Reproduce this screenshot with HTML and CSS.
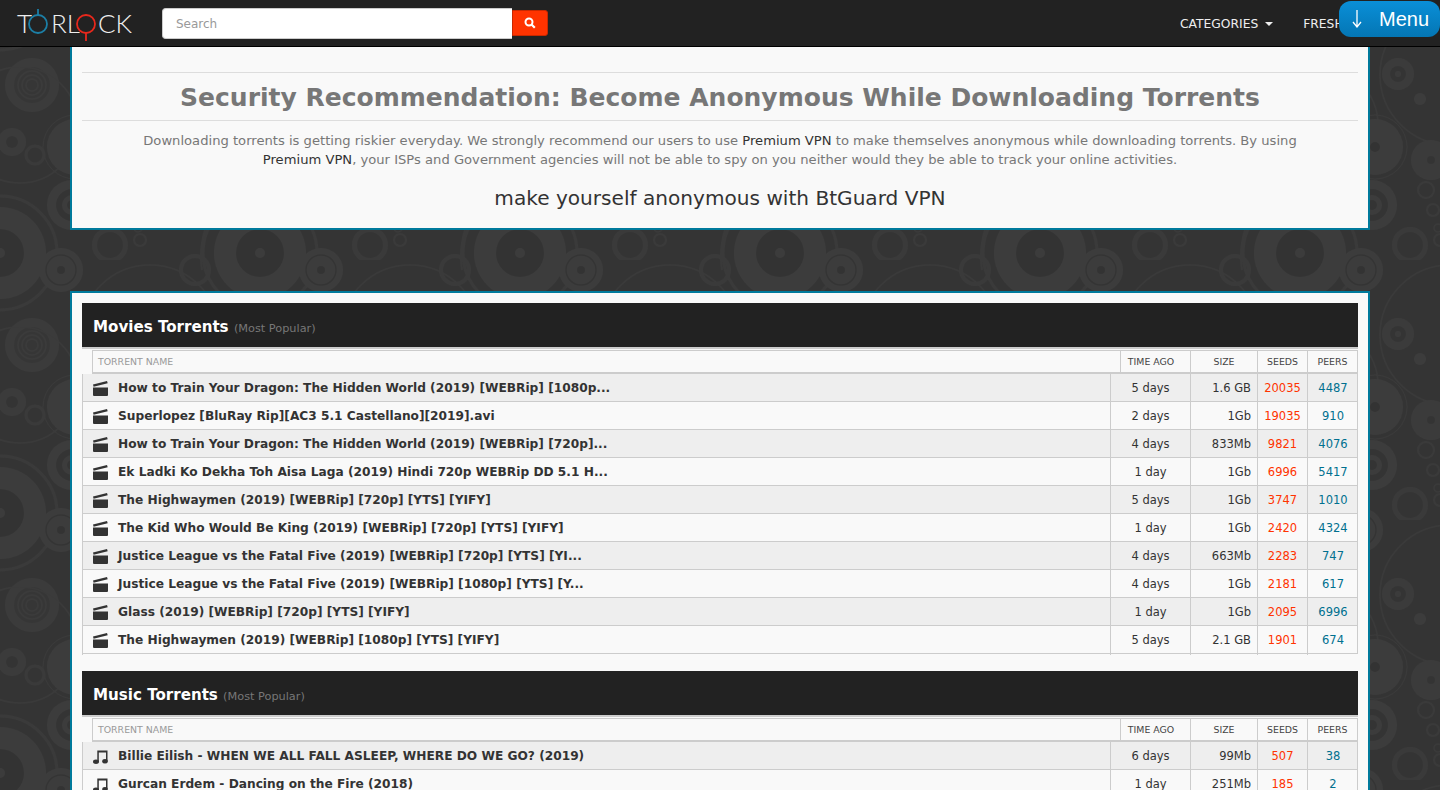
FILE: index.html
```html
<!DOCTYPE html>
<html lang="en">
<head>
  <meta charset="UTF-8" />
  <title>Torlock</title>
  <link rel="stylesheet" href="styles.css">
</head>
<body>

  <header class="navbar">
    <svg class="logo" width="116" height="35" viewBox="0 0 116 35">
      <text class="logo-text" x="1" y="27">T</text>
      <circle cx="22" cy="18" r="9" fill="none" stroke="#1c7fa6" stroke-width="1.800"/>
      <path d="M22 3v6" stroke="#1c7fa6" stroke-width="1.800"/>
      <text class="logo-text" x="35" y="27">RL</text>
      <circle cx="70" cy="18" r="9" fill="none" stroke="#e8281c" stroke-width="1.800"/>
      <path d="M70 27v8" stroke="#e8281c" stroke-width="1.800"/>
      <text class="logo-text" x="82" y="27">CK</text>
    </svg>
    <form class="search">
      <input class="search-input" type="text" placeholder="Search">
      <button class="search-btn" type="button" aria-label="Search">
        <svg width="12" height="12" viewBox="0 0 12 12"><circle cx="5" cy="5" r="3.500" fill="none" stroke="#fff" stroke-width="2"/><path d="M7.500 7.500l3.300 3.300" stroke="#fff" stroke-width="2.200"/></svg>
      </button>
    </form>
    <nav class="nav-links">
      <a href="#">CATEGORIES <span class="caret"></span></a>
      <a href="#">FRESH</a>
    </nav>
  </header>

  <a class="menu-btn" href="#">
    <svg width="10" height="18" viewBox="0 0 10 18"><path d="M5 0v17M1 12l4 5 4-5" fill="none" stroke="#fff" stroke-width="1.300"/></svg>
    Menu
  </a>

  <main class="page">
    <section class="panel panel-vpn">
      <hr class="rule">
      <h1>Security Recommendation: Become Anonymous While Downloading Torrents</h1>
      <hr class="rule">
      <p class="vpn-text">Downloading torrents is getting riskier everyday. We strongly recommend our users to use <a href="#">Premium VPN</a> to make themselves anonymous while downloading torrents. By using <a href="#">Premium VPN</a>, your ISPs and Government agencies will not be able to spy on you neither would they be able to track your online activities.</p>
      <p class="vpn-link"><a href="#">make yourself anonymous with BtGuard VPN</a></p>
    </section>

    <section class="panel panel-lists">
      <div class="torrent-list">
        <h2 class="list-title">Movies Torrents <small>(Most Popular)</small></h2>
        <div class="head"><span class="name">TORRENT NAME</span><span class="time">TIME AGO</span><span>SIZE</span><span>SEEDS</span><span>PEERS</span></div>

        <div class="row">
          <a class="name" href="#"><svg class="ico"><use href="#clapper"/></svg>How to Train Your Dragon: The Hidden World (2019) [WEBRip] [1080p...</a>
          <span>5 days</span><span class="size">1.6 GB</span><span class="seeds">20035</span><span class="peers">4487</span>
        </div>
        <div class="row">
          <a class="name" href="#"><svg class="ico"><use href="#clapper"/></svg>Superlopez [BluRay Rip][AC3 5.1 Castellano][2019].avi</a>
          <span>2 days</span><span class="size">1Gb</span><span class="seeds">19035</span><span class="peers">910</span>
        </div>
        <div class="row">
          <a class="name" href="#"><svg class="ico"><use href="#clapper"/></svg>How to Train Your Dragon: The Hidden World (2019) [WEBRip] [720p]...</a>
          <span>4 days</span><span class="size">833Mb</span><span class="seeds">9821</span><span class="peers">4076</span>
        </div>
        <div class="row">
          <a class="name" href="#"><svg class="ico"><use href="#clapper"/></svg>Ek Ladki Ko Dekha Toh Aisa Laga (2019) Hindi 720p WEBRip DD 5.1 H...</a>
          <span>1 day</span><span class="size">1Gb</span><span class="seeds">6996</span><span class="peers">5417</span>
        </div>
        <div class="row">
          <a class="name" href="#"><svg class="ico"><use href="#clapper"/></svg>The Highwaymen (2019) [WEBRip] [720p] [YTS] [YIFY]</a>
          <span>5 days</span><span class="size">1Gb</span><span class="seeds">3747</span><span class="peers">1010</span>
        </div>
        <div class="row">
          <a class="name" href="#"><svg class="ico"><use href="#clapper"/></svg>The Kid Who Would Be King (2019) [WEBRip] [720p] [YTS] [YIFY]</a>
          <span>1 day</span><span class="size">1Gb</span><span class="seeds">2420</span><span class="peers">4324</span>
        </div>
        <div class="row">
          <a class="name" href="#"><svg class="ico"><use href="#clapper"/></svg>Justice League vs the Fatal Five (2019) [WEBRip] [720p] [YTS] [YI...</a>
          <span>4 days</span><span class="size">663Mb</span><span class="seeds">2283</span><span class="peers">747</span>
        </div>
        <div class="row">
          <a class="name" href="#"><svg class="ico"><use href="#clapper"/></svg>Justice League vs the Fatal Five (2019) [WEBRip] [1080p] [YTS] [Y...</a>
          <span>4 days</span><span class="size">1Gb</span><span class="seeds">2181</span><span class="peers">617</span>
        </div>
        <div class="row">
          <a class="name" href="#"><svg class="ico"><use href="#clapper"/></svg>Glass (2019) [WEBRip] [720p] [YTS] [YIFY]</a>
          <span>1 day</span><span class="size">1Gb</span><span class="seeds">2095</span><span class="peers">6996</span>
        </div>
        <div class="row">
          <a class="name" href="#"><svg class="ico"><use href="#clapper"/></svg>The Highwaymen (2019) [WEBRip] [1080p] [YTS] [YIFY]</a>
          <span>5 days</span><span class="size">2.1 GB</span><span class="seeds">1901</span><span class="peers">674</span>
        </div>
      </div>

      <div class="torrent-list">
        <h2 class="list-title">Music Torrents <small>(Most Popular)</small></h2>
        <div class="head"><span class="name">TORRENT NAME</span><span class="time">TIME AGO</span><span>SIZE</span><span>SEEDS</span><span>PEERS</span></div>

        <div class="row">
          <a class="name" href="#"><svg class="ico"><use href="#note"/></svg>Billie Eilish - WHEN WE ALL FALL ASLEEP, WHERE DO WE GO? (2019)</a>
          <span>6 days</span><span class="size">99Mb</span><span class="seeds">507</span><span class="peers">38</span>
        </div>
        <div class="row">
          <a class="name" href="#"><svg class="ico"><use href="#note"/></svg>Gurcan Erdem - Dancing on the Fire (2018)</a>
          <span>1 day</span><span class="size">251Mb</span><span class="seeds">185</span><span class="peers">2</span>
        </div>
      </div>
    </section>
  </main>

  <svg class="icon-defs" width="0" height="0">
    <symbol id="clapper" viewBox="0 0 15 15">
      <path d="M0 6.500h15V14a1 1 0 0 1-1 1H1a1 1 0 0 1-1-1z" fill="#333"/>
      <path d="M0 3.500L14 0l.7 2.200L.6 5.700z" fill="#333"/>
    </symbol>
    <symbol id="note" viewBox="0 0 15 15">
      <path d="M4.300 1.500H14.500V12h-1.500V3.500H5.800V13H4.300z" fill="#333"/>
      <ellipse cx="3" cy="12.800" rx="3" ry="2.200" fill="#333"/>
      <ellipse cx="12" cy="12.300" rx="2.800" ry="2.200" fill="#333"/>
    </symbol>
  </svg>

</body>
</html>
```

FILE: styles.css
```css
html, body {
  margin: 0;
  padding: 0;
  height: 100vh;
  overflow: hidden;
}

body {
  font-family: "DejaVu Sans", Verdana, sans-serif;
  font-size: 12px;
  color: #333;
  background-color: #343434;
  background-image: url("data:image/svg+xml,%3Csvg xmlns='http://www.w3.org/2000/svg' xmlns:xlink='http://www.w3.org/1999/xlink' width='260' height='260'%3E%3Cdefs%3E%3Cg id='d'%3E%3Ccircle r='57' fill='none' stroke='%233a3a3a' stroke-width='3'/%3E%3Ccircle r='46' fill='%233c3c3c'/%3E%3Ccircle r='24' fill='%23333'/%3E%3Ccircle r='5' fill='%233c3c3c'/%3E%3C/g%3E%3Cg id='e'%3E%3Ccircle r='22' fill='%233c3c3c'/%3E%3Ccircle r='15' fill='none' stroke='%23343434' stroke-width='1.500'/%3E%3Ccircle r='4' fill='%23333'/%3E%3C/g%3E%3Cg id='f'%3E%3Ccircle cx='195' cy='10' r='14' fill='none' stroke='%233a3a3a' stroke-width='4'/%3E%3Ccircle cx='150' cy='75' r='70' fill='none' stroke='%233a3a3a' stroke-width='1.500'/%3E%3Cpath d='M205 -30q-6 20 -3 40' fill='none' stroke='%233a3a3a' stroke-width='2'/%3E%3C/g%3E%3C/defs%3E%3Cuse xlink:href='%23f'/%3E%3Cuse xlink:href='%23f' y='260'/%3E%3Cuse xlink:href='%23d' x='0' y='253'/%3E%3Cuse xlink:href='%23d' x='260' y='253'/%3E%3Cuse xlink:href='%23d' x='0' y='-7'/%3E%3Cuse xlink:href='%23d' x='260' y='-7'/%3E%3Cuse xlink:href='%23e' x='61' y='10'/%3E%3Cuse xlink:href='%23e' x='61' y='270'/%3E%3Ccircle cx='110' cy='245' r='15.500' fill='none' stroke='%233a3a3a' stroke-width='5'/%3E%3Ccircle cx='140' cy='240' r='6' fill='none' stroke='%233a3a3a' stroke-width='2'/%3E%3Ccircle cx='32' cy='85' r='27' fill='%233b3b3b'/%3E%3Ccircle cx='32' cy='85' r='18' fill='%23363636'/%3E%3Ccircle cx='32' cy='85' r='14' fill='none' stroke='%233b3b3b' stroke-width='1.500'/%3E%3Ccircle cx='32' cy='85' r='10' fill='none' stroke='%233b3b3b' stroke-width='1.500'/%3E%3Ccircle cx='32' cy='85' r='6' fill='none' stroke='%233b3b3b' stroke-width='1.500'/%3E%3Ccircle cx='20' cy='125' r='58' fill='none' stroke='%233a3a3a' stroke-width='1.500'/%3E%3Ccircle cx='12' cy='142' r='14' fill='%233b3b3b'/%3E%3Ccircle cx='12' cy='142' r='6' fill='%23343434'/%3E%3Ccircle cx='35' cy='155' r='9' fill='none' stroke='%233a3a3a' stroke-width='3'/%3E%3Ccircle cx='75' cy='147' r='32' fill='none' stroke='%233a3a3a' stroke-width='1'/%3E%3Ccircle cx='75' cy='147' r='28' fill='%233c3c3c'/%3E%3Ccircle cx='75' cy='147' r='5' fill='%23333'/%3E%3Ccircle cx='72' cy='205' r='25' fill='%233c3c3c'/%3E%3Ccircle cx='72' cy='205' r='16' fill='%23343434'/%3E%3Ccircle cx='72' cy='205' r='10' fill='%233c3c3c'/%3E%3Ccircle cx='72' cy='205' r='5' fill='%23343434'/%3E%3Ccircle cx='98' cy='74' r='16' fill='%233b3b3b'/%3E%3Ccircle cx='98' cy='74' r='8' fill='%23343434'/%3E%3Ccircle cx='98' cy='74' r='3' fill='%233b3b3b'/%3E%3Ccircle cx='120' cy='99' r='6' fill='%233c3c3c'/%3E%3Ccircle cx='131' cy='160' r='20' fill='%233b3b3b'/%3E%3Ccircle cx='131' cy='160' r='4' fill='%23343434'/%3E%3Ccircle cx='126' cy='190' r='8' fill='none' stroke='%233a3a3a' stroke-width='2'/%3E%3Ccircle cx='133' cy='210' r='6' fill='none' stroke='%233a3a3a' stroke-width='2'/%3E%3Ccircle cx='138' cy='228' r='4' fill='none' stroke='%233a3a3a' stroke-width='1.500'/%3E%3C/svg%3E");
}

a {
  color: inherit;
  text-decoration: none;
}

/* top bar */
.navbar {
  display: flex;
  align-items: center;
  height: 46px;
  padding-left: 16px;
  background-color: #222;
  border-bottom: 1px solid #000;
}

.logo {
  flex: none;
  width: 116px;
  height: 35px;
}

.logo-text {
  font-family: Lato, "Open Sans", sans-serif;
  font-weight: 300;
  font-size: 26px;
  fill: #eee;
}

.search {
  display: flex;
  align-items: center;
  margin-left: 30px;
}

.search-input {
  width: 350px;
  height: 31px;
  box-sizing: border-box;
  padding: 2px 13px 0;
  border: 1px solid #ccc;
  border-right: 0;
  border-radius: 4px 0 0 4px;
  font-family: "DejaVu Sans", sans-serif;
  font-size: 12px;
  background: #fff;
}

.search-input::placeholder {
  color: #999;
}

.search-btn {
  display: flex;
  align-items: center;
  justify-content: center;
  width: 36px;
  height: 26px;
  padding: 0;
  border: 1px solid #c92800;
  border-radius: 0 3px 3px 0;
  background-color: #ff3300;
}

.nav-links {
  display: flex;
  gap: 30px;
  margin-left: auto;
  width: 260px;
  box-sizing: border-box;
  padding-top: 1px;
  font-size: 12.300px;
  color: #eee;
  white-space: nowrap;
}

.caret {
  display: inline-block;
  margin-left: 3px;
  vertical-align: middle;
  border-top: 4px solid #eee;
  border-left: 4px solid transparent;
  border-right: 4px solid transparent;
}

.menu-btn {
  position: absolute;
  top: 1px;
  right: 0;
  display: flex;
  align-items: center;
  justify-content: space-between;
  width: 101px;
  height: 36px;
  box-sizing: border-box;
  padding: 0 11px 0 13px;
  border-radius: 12px;
  background: linear-gradient(#0a8fd8, #0476b4);
  color: #fff;
  font-family: "Liberation Sans", sans-serif;
  font-size: 20px;
}

/* panels */
.page {
  display: flex;
  flex-direction: column;
  gap: 61px;
  width: 1300px;
  margin: 0 auto;
}

.panel {
  box-sizing: border-box;
  padding: 0 10px;
  background-color: #f9f9f9;
  border: 2px solid #007a9c;
}

.panel-vpn {
  height: 183px;
  border-top: 0;
  text-align: center;
}

.rule {
  height: 1px;
  margin: 0;
  border: 0;
  background-color: #ddd;
}

.panel-vpn > .rule:first-child {
  margin-top: 25px;
}

.panel-vpn h1 {
  margin: 0;
  height: 47px;
  font-size: 25px;
  line-height: 50px;
  color: #777;
}

.vpn-text {
  margin: 10px 0 0;
  padding: 0 40px;
  font-size: 13.130px;
  line-height: 19px;
  color: #777;
}

.vpn-text a {
  color: #333;
}

.vpn-link {
  margin: 15px 0 0;
  font-size: 20.100px;
  line-height: 28px;
  color: #333;
}

.panel-lists {
  padding-top: 10px;
  height: 600px;
}

.torrent-list + .torrent-list {
  margin-top: 17px;
}

.list-title {
  margin: 0;
  height: 44px;
  padding-left: 11px;
  border-bottom: 2px solid #ccc;
  background-color: #222;
  font-size: 15.100px;
  line-height: 48px;
  color: #fff;
}

.list-title small {
  font-size: 11.300px;
  font-weight: normal;
  color: #777;
}

/* torrent rows */
.head,
.row {
  display: grid;
  text-align: center;
}

.head {
  grid-template-columns: 1027px 70px 67px 50px 50px;
  height: 24px;
  margin: 1px 0 0 10px;
  box-sizing: border-box;
  border: 1px solid #ccc;
  border-bottom-width: 2px;
  background-color: #f9f9f9;
  font-size: 9.400px;
  line-height: 21px;
  color: #444;
}

.head span + span {
  border-left: 1px solid #ccc;
}

.head .name {
  padding-left: 5px;
  text-align: left;
  color: #999;
}

.head .time {
  padding-right: 9px;
}

.row {
  grid-template-columns: 1028px 80px 67px 50px 51px;
  height: 28px;
  box-sizing: border-box;
  border-right: 1px solid #ccc;
  border-bottom: 1px solid #ccc;
  font-size: 11.500px;
  line-height: 29px;
}

.row:nth-of-type(odd) {
  background-color: #f9f9f9;
}

.row:nth-of-type(even) {
  background-color: #eee;
}

.row span {
  border-left: 1px solid #ccc;
}

.row .name {
  display: flex;
  align-items: center;
  padding-left: 10px;
  border-left: 1px solid #ccc;
  font-size: 12.200px;
  font-weight: bold;
  text-align: left;
  color: #333;
  white-space: nowrap;
}

.ico {
  flex: none;
  width: 15px;
  height: 15px;
  margin-right: 10px;
}

.row .size {
  padding-right: 6px;
  text-align: right;
}

.seeds {
  color: #ff3300;
}

.peers {
  color: #00708f;
}

.icon-defs {
  position: absolute;
}
```
